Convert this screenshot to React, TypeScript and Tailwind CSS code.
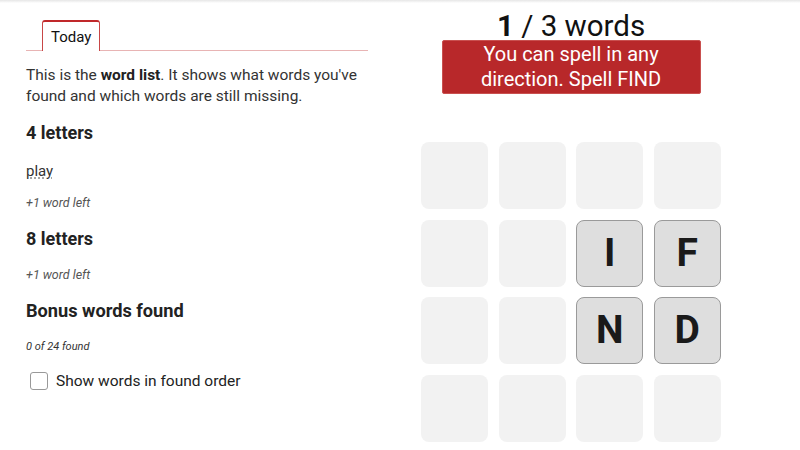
import React from "react";

const grid: (string | null)[] = [
  null, null, null, null,
  null, null, "I", "F",
  null, null, "N", "D",
  null, null, null, null,
];

export default function App() {
  return (
    <div className="w-[800px] h-[450px] bg-white overflow-hidden text-[#222]" style={{ fontFamily: "Roboto, 'Noto Sans', sans-serif" }}>
      <div className="h-[3px] bg-gradient-to-b from-[#e6e6e6] to-white" />
      <div className="flex pl-[26px] gap-[32px]">
        <div className="w-[342px] flex flex-col">
          <div className="mt-[17px] flex border-b border-[#e8b4b4]">
            <div className="ml-[16px] px-[8px] h-[31px] flex items-center border-x border-t-2 border-[#c0282a] border-x-[#c84646] rounded-t-[3px] text-[15px] text-[#111] mb-[-1px] bg-white pt-[1px]">
              Today
            </div>
          </div>
          <p className="mt-[14px] text-[15.5px] leading-[21px] text-[#333]">
            This is the <b className="font-bold text-[#222]">word list</b>. It shows what words you've found and which words are still missing.
          </p>
          <h2 className="mt-[14px] text-[18px] leading-[24px] font-bold text-[#222]">4 letters</h2>
          <div className="mt-[17px] text-[15px] leading-[18px] text-[#333]">
            <span className="underline decoration-dotted decoration-[#888] underline-offset-2">play</span>
          </div>
          <div className="mt-[15px] text-[12.5px] leading-[15px] italic text-[#555]">+1 word left</div>
          <h2 className="mt-[17px] text-[18px] leading-[24px] font-bold text-[#222]">8 letters</h2>
          <div className="mt-[16px] text-[12.5px] leading-[15px] italic text-[#555]">+1 word left</div>
          <h2 className="mt-[17px] text-[18.2px] leading-[24px] font-bold text-[#222]">Bonus words found</h2>
          <div className="mt-[17px] text-[11px] leading-[14px] italic text-[#333]">0 of 24 found</div>
          <label className="mt-[18px] ml-[4px] flex items-center gap-[8px] text-[15.5px] leading-[18px] text-[#222]">
            <span className="w-[18px] h-[18px] border border-[#999] rounded-[3px] bg-white" />
            Show words in found order
          </label>
        </div>
        <div className="w-[342px] flex flex-col items-center">
          <div className="mt-[7px] text-[29.5px] leading-[32px] text-[#111]">
            <b className="font-bold">1</b> / 3 words
          </div>
          <div className="mt-[-2px] w-[259px] h-[54px] bg-[#b8282a] rounded-[2px] flex items-center justify-center text-center text-white text-[20px] leading-[25px] border border-[#c9504f]">
            <span>You can spell in any<br />direction. Spell FIND</span>
          </div>
          <div className="mt-[48px] grid grid-cols-[repeat(4,67px)] grid-rows-[repeat(4,67px)] gap-x-[10.5px] gap-y-[10.5px]">
            {grid.map((c, i) =>
              c ? (
                <div key={i} className="rounded-[8px] bg-[#dedede] border border-[#9a9a9a] flex items-center justify-center text-[39px] font-bold text-[#1a1a1a]">
                  {c}
                </div>
              ) : (
                <div key={i} className="rounded-[8px] bg-[#f2f2f2]" />
              )
            )}
          </div>
        </div>
      </div>
    </div>
  );
}
